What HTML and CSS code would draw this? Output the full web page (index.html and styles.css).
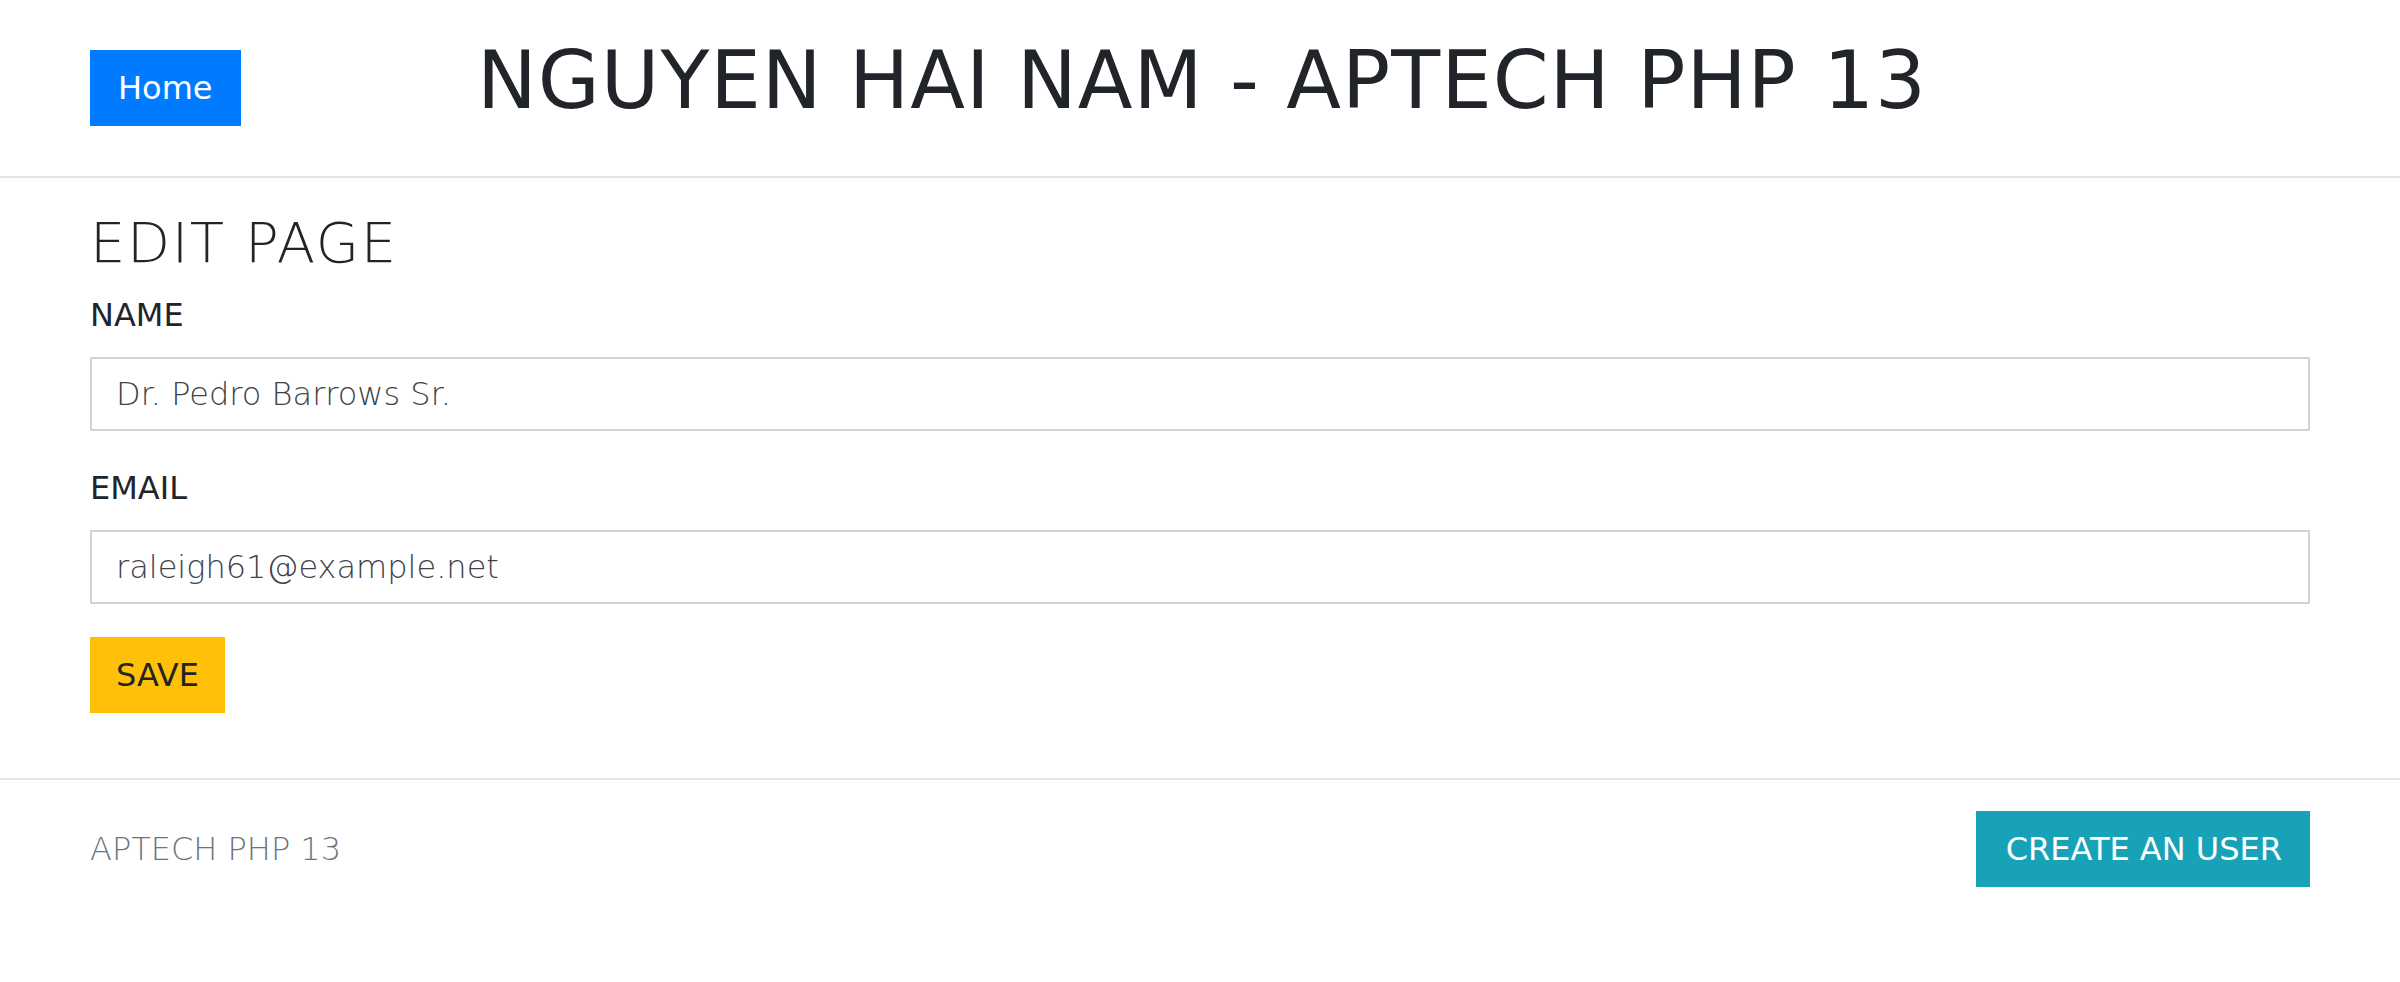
FILE: index.html
```html
<!DOCTYPE html>
<html lang="en">
<head>
<meta charset="utf-8">
<title>Edit Page</title>
<link rel="stylesheet" href="styles.css">
</head>
<body>
<header class="site-header">
  <div class="container header-row">
    <div class="col-left">
      <a class="btn btn-primary" href="#">Home</a>
    </div>
    <div class="col-right">
      <h1 class="site-title">NGUYEN HAI NAM - APTECH PHP 13</h1>
    </div>
  </div>
</header>
<main class="container main">
  <h3 class="page-title">EDIT PAGE</h3>
  <form class="form">
    <div class="form-group">
      <label class="label" for="name">NAME</label>
      <input class="form-control" id="name" type="text" value="Dr. Pedro Barrows Sr.">
    </div>
    <div class="form-group">
      <label class="label" for="email">EMAIL</label>
      <input class="form-control" id="email" type="text" value="raleigh61@example.net">
    </div>
    <button class="btn btn-warning" type="button">SAVE</button>
  </form>
</main>
<footer class="site-footer">
  <div class="container footer-row">
    <span class="footer-text">APTECH PHP 13</span>
    <a class="btn btn-info" href="#">CREATE AN USER</a>
  </div>
</footer>
</body>
</html>
```
FILE: styles.css
```css
* { box-sizing: border-box; }
html, body { margin: 0; padding: 0; background: #fff; }
body {
  font-family: "DejaVu Sans", "Liberation Sans", sans-serif;
  color: #212529;
}
.container {
  width: 2220px;
  margin: 0 auto;
}
.site-header {
  padding-top: 33px;
  padding-bottom: 47px;
  border-bottom: 2px solid #e5e5e5;
}
.header-row {
  display: flex;
  align-items: flex-start;
}
.col-left { width: 380px; padding-top: 17px; }
.col-right { flex: 1; padding-left: 7px; }
.site-title {
  margin: 0;
  font-size: 80px;
  line-height: 96px;
  font-weight: 400;
  letter-spacing: 1px;
  color: #212529;
}
.btn {
  display: inline-block;
  height: 76px;
  line-height: 76px;
  padding: 0 26px;
  font-size: 32px;
  font-family: "DejaVu Sans", sans-serif;
  text-decoration: none;
  border: none;
  border-radius: 0;
  cursor: pointer;
}
.btn-primary { background: #007bff; color: #fff; padding: 0 28px; }
.btn-warning { background: #ffc107; color: #212529; }
.btn-info { background: #17a2b8; color: #fff; padding: 0 28px 0 30px; }
.main { padding-top: 31px; padding-bottom: 65px; }
.page-title {
  margin: 0 0 15px;
  font-size: 56px;
  line-height: 67px;
  font-weight: 300;
  letter-spacing: 1.6px;
}
.form-group { margin-bottom: 33px; }
.label {
  display: block;
  font-size: 32px;
  line-height: 48px;
  margin-bottom: 18px;
}
.form-control {
  display: block;
  width: 100%;
  height: 74px;
  padding: 0 24px;
  font-family: "DejaVu Sans", sans-serif;
  font-size: 32px;
  font-weight: 300;
  line-height: 48px;
  color: #3d434a;
  background: #fff;
  border: 2px solid #ced4da;
  border-radius: 0;
  outline: none;
}
.site-footer {
  border-top: 2px solid #e5e5e5;
  padding-top: 31px;
}
.footer-row {
  display: flex;
  justify-content: space-between;
  align-items: center;
}
.footer-text {
  font-size: 32px;
  font-weight: 300;
  color: #6c757d;
}
```
